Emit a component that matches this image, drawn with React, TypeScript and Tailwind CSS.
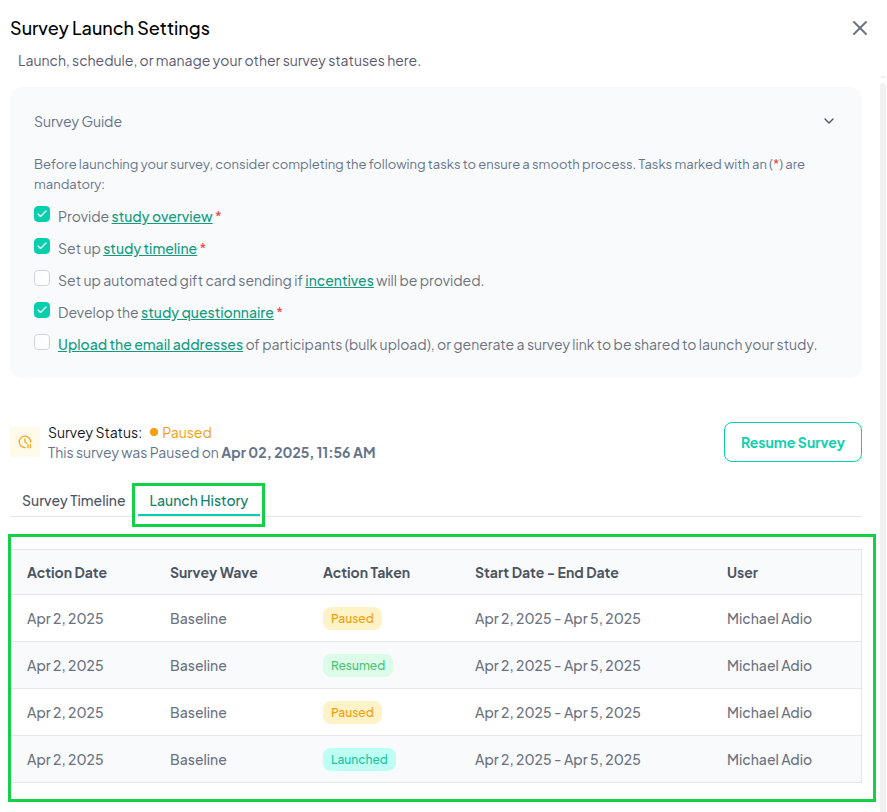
import { useState } from "react"
import type { ReactNode } from "react"
import { Check, ChevronDown, X } from "lucide-react"

const tasks = [
  { id: "overview", done: true, before: "Provide ", link: "study overview", after: "", required: true },
  { id: "timeline", done: true, before: "Set up ", link: "study timeline", after: "", required: true },
  { id: "incentives", done: false, before: "Set up automated gift card sending if ", link: "incentives", after: " will be provided.", required: false },
  { id: "questionnaire", done: true, before: "Develop the ", link: "study questionnaire", after: "", required: true },
  {
    id: "emails",
    done: false,
    before: "",
    link: "Upload the email addresses",
    after: " of participants (bulk upload), or generate a survey link to be shared to launch your study.",
    required: false,
  },
]

const badgeStyles: Record<string, string> = {
  Paused: "bg-[#fef3c7] text-[#f59e0b]",
  Resumed: "bg-[#dcfce7] text-[#4cc27a]",
  Launched: "bg-[#befff3] text-[#1cc5a8]",
}

const columns = [
  { label: "Action Date", width: "w-[143px]" },
  { label: "Survey Wave", width: "w-[153px]" },
  { label: "Action Taken", width: "w-[152px]" },
  { label: "Start Date - End Date", width: "w-[252px]" },
  { label: "User", width: "" },
]

const history = ["Paused", "Resumed", "Paused", "Launched"].map((action) => ({
  date: "Apr 2, 2025",
  wave: "Baseline",
  action,
  range: "Apr 2, 2025 - Apr 5, 2025",
  user: "Michael Adio",
}))

// Green frame laid over the part that should stand out
function Highlight({ className }: { className: string }) {
  return <div className={`pointer-events-none absolute border-3 border-[#12d147] ${className}`} />
}

function TaskItem({ id, done, required, children }: { id: string; done: boolean; required: boolean; children: ReactNode }) {
  const [checked, setChecked] = useState(done)
  return (
    <li className="flex items-start gap-2">
      <span className="grid shrink-0">
        <input
          id={id}
          type="checkbox"
          checked={checked}
          onChange={() => setChecked(!checked)}
          className="col-start-1 row-start-1 size-4 appearance-none rounded border border-[#cbd5e1] bg-white checked:border-[#05cfac] checked:bg-[#05cfac]"
        />
        {checked && <Check className="pointer-events-none col-start-1 row-start-1 size-3 place-self-center text-white" strokeWidth={2.5} />}
      </span>
      <label htmlFor={id} className="text-sm leading-5 text-[#6b7280]">
        {children}
        {required && <span className="text-[#ef4444]"> *</span>}
      </label>
    </li>
  )
}

function SurveyGuide() {
  return (
    <section className="rounded-xl bg-[#f9fafc] p-6">
      <button type="button" className="flex w-full items-center justify-between text-sm leading-5 text-[#64748b]">
        Survey Guide
        <ChevronDown className="mr-px size-4 text-[#475569]" />
      </button>
      <p className="mt-[23px] text-[13px] leading-5 text-[#64748b]">
        Before launching your survey, consider completing the following tasks to ensure a smooth process. Tasks marked with an (
        <span className="text-[#ef4444]">*</span>) are mandatory:
      </p>
      <ul className="mt-3 flex flex-col gap-3">
        {tasks.map((t) => (
          <TaskItem key={t.id} id={t.id} done={t.done} required={t.required}>
            {t.before}
            <a href={`#${t.id}`} className="font-medium text-[#119c82] underline">
              {t.link}
            </a>
            {t.after}
          </TaskItem>
        ))}
      </ul>
    </section>
  )
}

function StatusBar() {
  return (
    <section className="mt-11 flex items-center justify-between">
      <div className="flex items-center gap-2">
        <span className="flex size-[30px] items-center justify-center bg-[#fffbeb] text-[#f5a623]">
          <svg viewBox="0 0 14 14" className="size-3.5" fill="none" stroke="currentColor" strokeWidth="1.3" strokeLinecap="round" aria-hidden="true">
            <path d="M7.2 12.6A5.7 5.7 0 1 1 12.6 7.2" />
            <path d="M6.9 3.8V7L8.6 8.3" />
            <path d="M10 9.6V12.8M12.4 9.6V12.8" />
          </svg>
        </span>
        <div className="text-sm leading-5">
          <p className="flex items-center text-[#111827]">
            Survey Status:
            <span className="mr-1 ml-2 size-2 rounded-full bg-[#f59e0b]" />
            <span className="text-[#f59e0b]">Paused</span>
          </p>
          <p className="text-[#64748b]">
            This survey was Paused on <strong className="font-bold">Apr 02, 2025, 11:56 AM</strong>
          </p>
        </div>
      </div>
      <button type="button" className="h-10 rounded-lg border border-[#05cfac] px-4 text-sm font-bold text-[#12cfae]">
        Resume Survey
      </button>
    </section>
  )
}

function HistoryTable() {
  return (
    <div className="relative mt-8">
      <table className="w-full table-fixed border-separate border-spacing-0 border border-[#e5e7eb] text-left text-sm">
        <thead>
          <tr className="h-11 bg-[#f9fafc] text-[#4b5563]">
            {columns.map((c) => (
              <th key={c.label} scope="col" className={`px-4 font-bold ${c.width}`}>
                {c.label}
              </th>
            ))}
          </tr>
        </thead>
        <tbody>
          {history.map((row, i) => (
            <tr key={i} className="h-[47px] font-medium text-[#6b7280] even:bg-[#f9fafc]">
              <td className="border-t border-[#e5e7eb] px-4">{row.date}</td>
              <td className="border-t border-[#e5e7eb] px-4">{row.wave}</td>
              <td className="border-t border-[#e5e7eb] px-4">
                <span className={`inline-block rounded-lg px-2 text-xs leading-[23px] ${badgeStyles[row.action]}`}>{row.action}</span>
              </td>
              <td className="border-t border-[#e5e7eb] px-4">{row.range}</td>
              <td className="border-t border-[#e5e7eb] px-4">{row.user}</td>
            </tr>
          ))}
        </tbody>
      </table>
      <Highlight className="-top-[15px] -right-3.5 -bottom-[19px] -left-0.5" />
    </div>
  )
}

export default function App() {
  return (
    <div className="flex min-h-screen flex-col bg-white font-['Plus_Jakarta_Sans',Inter,sans-serif]">
      <header className="flex items-start justify-between pt-4 pr-[15px] pl-2.5">
        <div>
          <h1 className="text-lg leading-6 font-medium text-black">Survey Launch Settings</h1>
          <p className="mt-2.5 ml-2 text-sm leading-5 text-[#5b5873]">Launch, schedule, or manage your other survey statuses here.</p>
        </div>
        <button type="button" aria-label="Close" className="text-[#6b7280]">
          <X className="size-6" />
        </button>
      </header>

      <div className="mt-[5px] flex grow">
        <main className="mr-[18px] ml-2.5 min-w-0 grow pt-3">
          <SurveyGuide />
          <StatusBar />
          <div role="tablist" className="mt-7 flex border-b border-[#e5e7eb] text-sm leading-5 font-medium">
            <button type="button" role="tab" aria-selected="false" className="px-3 pb-1.5 text-[#4b5563]">
              Survey Timeline
            </button>
            <div className="relative">
              <button type="button" role="tab" aria-selected="true" className="border-b-2 border-[#05cfac] px-3 pb-1 text-[#0f7f6a]">
                Launch History
              </button>
              <Highlight className="-top-[7px] -right-[5px] -bottom-[11px] -left-1.5" />
            </div>
          </div>
          <HistoryTable />
        </main>
        <div className="mr-px flex w-1.5 flex-col" aria-hidden="true">
          <svg viewBox="0 0 6 3" className="mb-[5px] h-[3px] w-1.5" fill="#ededed">
            <path d="M3 0L6 3H0Z" />
          </svg>
          <div className="grow rounded-t-full bg-[#f1f1f1]" />
        </div>
      </div>
    </div>
  )
}
